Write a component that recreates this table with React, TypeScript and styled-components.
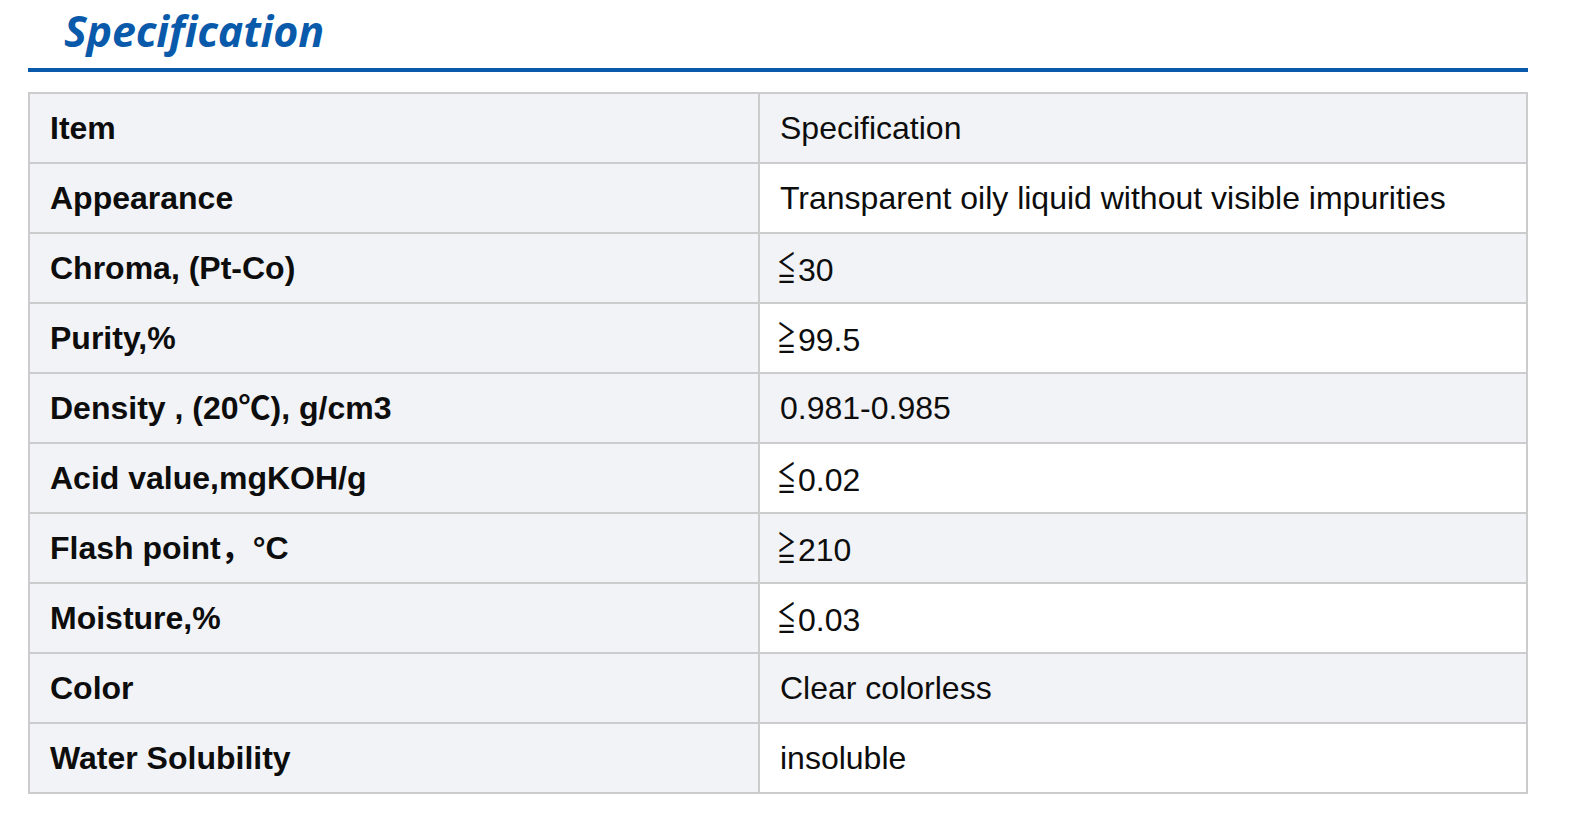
import React from "react";
import styled, { createGlobalStyle } from "styled-components";

const GlobalStyle = createGlobalStyle`
  html, body { margin: 0; padding: 0; background: #ffffff; }
  body { font-family: "Liberation Sans", "Noto Sans CJK SC", Arial, sans-serif; }
`;

const Page = styled.div`
  width: 1500px;
  padding: 0 0 0 28px;
`;

const Header = styled.div`
  height: 68px;
  border-bottom: 4px solid #0a5aab;
  display: flex;
  align-items: flex-end;
  box-sizing: content-box;
`;

const Title = styled.h2`
  margin: 0 0 16px 36px;
  font-family: "Open Sans", "Noto Sans", sans-serif;
  font-style: italic;
  font-weight: 700;
  font-size: 43px;
  line-height: 1;
  color: #0a5aab;
  letter-spacing: -0.2px;
`;

const Table = styled.table`
  margin-top: 20px;
  width: 1500px;
  border-collapse: collapse;
  border: 2px solid #cccccc;
  table-layout: fixed;
`;

const Row = styled.tr``;

const Cell = styled.td<{ $head?: boolean; $shade?: boolean }>`
  height: 70px;
  box-sizing: border-box;
  padding: 0 20px;
  border: 2px solid #cccccc;
  font-family: "Liberation Sans", "Noto Sans CJK SC", Arial, sans-serif;
  font-size: 32px;
  line-height: 36px;
  color: #0d0d0d;
  font-weight: ${(p) => (p.$head ? 700 : 400)};
  background: ${(p) => (p.$shade ? "#f2f3f6" : "#ffffff")};
  vertical-align: middle;
  white-space: nowrap;
`;

const Sym = styled.span`
  display: inline-block;
  font-family: "Noto Sans CJK SC", sans-serif;
  font-size: 34px;
  line-height: 36px;
  transform: scaleX(0.56);
  transform-origin: left center;
  margin-left: -3px;
  margin-right: -13px;
`;

const rows: [string, string][] = [
  ["Item", "Specification"],
  ["Appearance", "Transparent oily liquid without visible impurities"],
  ["Chroma, (Pt-Co)", "≦30"],
  ["Purity,%", "≧99.5"],
  ["Density , (20℃), g/cm3", "0.981-0.985"],
  ["Acid value,mgKOH/g", "≦0.02"],
  ["Flash point，°C", "≧210"],
  ["Moisture,%", "≦0.03"],
  ["Color", "Clear colorless"],
  ["Water Solubility", "insoluble"],
];

function renderValue(v: string) {
  const first = v.charAt(0);
  if (first === "≦" || first === "≧") {
    return (
      <>
        <Sym>{first}</Sym>
        {v.slice(1)}
      </>
    );
  }
  return v;
}

export default function App() {
  return (
    <>
      <GlobalStyle />
      <Page>
        <Header>
          <Title>Specification</Title>
        </Header>
        <Table>
          <colgroup>
            <col style={{ width: "730px" }} />
            <col />
          </colgroup>
          <tbody>
            {rows.map(([k, v], i) => (
              <Row key={k}>
                <Cell $head $shade>
                  {k}
                </Cell>
                <Cell $shade={i % 2 === 0}>{renderValue(v)}</Cell>
              </Row>
            ))}
          </tbody>
        </Table>
      </Page>
    </>
  );
}
